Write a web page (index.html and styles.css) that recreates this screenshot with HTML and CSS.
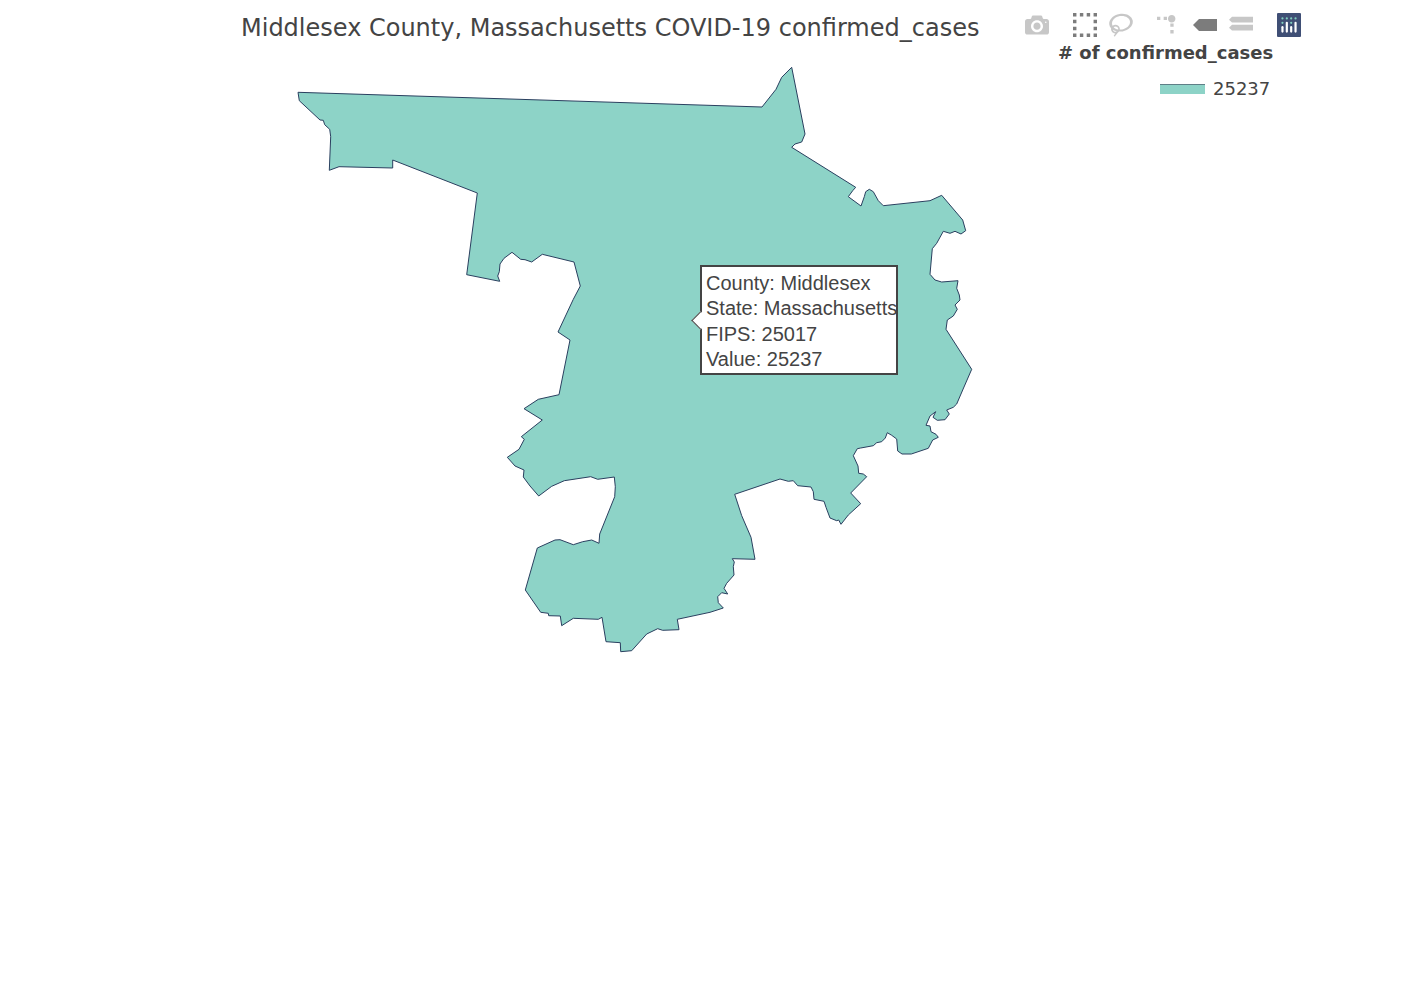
FILE: index.html
```html
<!DOCTYPE html>
<html lang="en">
<head>
    <meta charset="UTF-8">
    <meta name="viewport" content="width=device-width, initial-scale=1.0">
    <title>Middlesex County COVID-19</title>
    <link rel="stylesheet" href="styles.css">
</head>
<body>
    <div class="chart">
        <h1 class="chart-title">Middlesex County, Massachusetts COVID-19 confirmed_cases</h1>

        <!-- county outline, viewBox is in page coordinates -->
        <svg class="map" viewBox="0 56 1426 945">
            <path class="county" d="M298 92.3 299.3 100.7 320 120 323.3 120.3 324.7 124.7 329.7 129.3 330.7 136.7 329.3 170.3 339 166.7 392.7 168 392.7 160 477.3 193 466.7 274.7 499.7 281.3 497.7 276 499.3 271.7 500 264 504 258.3 512 252.3 520.7 259.3 525 259.7 531.7 262 542.3 254.3 574 262 580.3 286 573.3 299.3 558 332 570 340 559 394.7 538.3 399.3 524 408.7 542.3 420 521.3 436.7 524.3 439.3 519 449.3 507.3 457.3 515 466 524 470 523.3 477 530 486 538.7 496 551.7 486.3 564.3 480.7 590.7 476.7 597.7 479.3 614.3 477 615.3 486.7 614.7 496.7 599.7 534 599 543.3 591.7 540 582.7 541.7 573.3 544.7 560 539.7 555 540 537.3 548 525.3 590 540.7 612.3 548.3 613.3 548.7 615.7 560.3 616 561.7 625.7 573.3 618.3 598.3 619.3 602 617.3 606 641.7 620.3 642.7 620.7 651.7 631.7 650.7 646.7 634 657.7 628.7 662.7 630.3 679 629.7 677.3 619.3 710 612.3 723.3 608 718.3 602.7 717.7 596.7 721.7 592.7 727.7 594 724 588.3 726.7 583.3 734 575 733.3 566.7 734.3 562 732.3 558.7 755 559.3 751 537.3 741.7 515.7 734.7 494.3 780 479 788.3 481.3 793.3 480.7 797.7 485.7 811 487 813.3 491.7 814 499.3 824 501.3 826 507.3 830 518 836.7 520.7 838.7 520 841 524.3 848.3 515 860.7 503.7 850.7 493 866.7 476.7 863.3 474 858.7 473.3 858 466 853.3 455.7 857.3 448.7 860.7 448 873.3 445.7 876.7 442.7 881.7 441.7 885.3 438 887.3 432.7 891.7 435.3 896.7 439 897.7 451 902 454 911.3 454 928.3 448.3 932.7 440 938.3 437.3 936 434.3 931 431.7 930 426 926 425.3 930 416 935.7 411.7 933 417.3 937.3 420.3 945 419.7 949.3 414 946.7 410 953.3 407.3 956.7 404 962.7 390 971.7 369.3 946 329.3 947.3 320 953.3 316 957.3 309.3 955 305 960 300 959.3 295 956.7 288.3 958 280.7 941.7 282 935 280 930 274.3 932.3 248.7 936.7 243.3 943.3 231.3 950 233.3 955 231.3 961 234 965.7 230.7 962.7 220 941.7 195.3 930 200.7 883.3 205.7 878.3 200.7 873.3 191.7 869.3 189.3 865.7 191.7 864.3 196.7 861 206 848.3 196.7 852.7 190.7 855.7 187.3 791.7 147.3 795 144 801.7 142 805 134 791.7 67.3 781.7 77.3 776 89.3 762 107Z"/>
        </svg>

        <div class="hover-box">
            <div>County: Middlesex</div>
            <div>State: Massachusetts</div>
            <div>FIPS: 25017</div>
            <div>Value: 25237</div>
        </div>

        <div class="legend">
            <div class="legend-title"># of confirmed_cases</div>
            <div class="legend-item">
                <span class="legend-swatch"></span>
                <span>25237</span>
            </div>
        </div>

        <div class="modebar">
            <div class="modebar-group">
                <svg class="icon" viewBox="0 0 1000 1000"><path transform="matrix(1 0 0 -1 0 850)" d="m500 450c-83 0-150-67-150-150 0-83 67-150 150-150 83 0 150 67 150 150 0 83-67 150-150 150z m400 150h-120c-16 0-34 13-39 29l-31 93c-6 15-23 28-40 28h-340c-16 0-34-13-39-28l-31-94c-6-15-23-28-40-28h-120c-55 0-100-45-100-100v-450c0-55 45-100 100-100h800c55 0 100 45 100 100v450c0 55-45 100-100 100z m-400-550c-138 0-250 112-250 250 0 138 112 250 250 250 138 0 250-112 250-250 0-138-112-250-250-250z m365 380c-19 0-35 16-35 35 0 19 16 35 35 35 19 0 35-16 35-35 0-19-16-35-35-35z"/></svg>
            </div>
            <div class="modebar-group">
                <svg class="icon icon-select" viewBox="0 0 1000 1000"><path d="M0 0h143v143H0z M286 0h143v143H286z M571 0h143v143H571z M857 0h143v143H857z M0 286h143v143H0z M857 286h143v143H857z M0 571h143v143H0z M857 571h143v143H857z M0 857h143v143H0z M286 857h143v143H286z M571 857h143v143H571z M857 857h143v143H857z"/></svg>
                <svg class="icon" viewBox="0 0 1031 1000"><path transform="matrix(1 0 0 -1 0 850)" d="m1018 538c-36 207-290 336-568 286-277-48-473-256-436-463 10-57 36-108 76-151-13-66 11-137 68-183 34-28 75-41 114-42l-55-70 0 0c-2-1-3-2-4-3-10-14-8-34 5-45 14-11 34-8 45 4 1 1 2 3 2 5l0 0 113 140c16 11 31 24 45 40 4 3 6 7 8 11 48-3 100 0 151 9 278 48 473 255 436 462z m-624-379c-80 14-149 48-197 96 42 42 109 47 156 9 33-26 47-66 41-105z m-187-74c-19 16-33 37-39 60 50-32 109-55 174-68-42-25-95-24-135 8z m360 75c-34-7-69-9-102-8 8 62-16 128-68 170-73 59-175 54-244-5-9 20-16 40-20 61-28 159 121 317 333 354s407-60 434-217c28-159-121-318-333-355z"/></svg>
            </div>
            <div class="modebar-group">
                <svg class="icon" viewBox="0 0 1000 1000"><path transform="matrix(1.5 0 0 -1.5 0 850)" d="M512 409c0-57-46-104-103-104-57 0-104 47-104 104 0 57 47 103 104 103 57 0 103-46 103-103z m-327-39l92 0 0 92-92 0z m-185 0l92 0 0 92-92 0z m370-186l92 0 0 93-92 0z m0-184l92 0 0 92-92 0z"/></svg>
                <svg class="icon icon-active" viewBox="0 0 1500 1500"><path transform="translate(0 250)" d="M375 125 0 500 375 875H1500V125Z"/></svg>
                <svg class="icon" viewBox="0 0 1500 1500"><path d="M188 190 0 375 188 560H1500V190Z M188 690 0 875 188 1060H1500V690Z" transform="translate(0 -10) translate(0 50)"/></svg>
            </div>
            <div class="modebar-group">
                <svg class="icon" viewBox="0 0 132 132">
                    <rect class="logo-bg" width="132" height="132" rx="6" ry="6"/>
                    <g class="logo-dots">
                        <circle cx="30" cy="30" r="6"/>
                        <circle cx="54" cy="30" r="6"/>
                        <circle cx="78" cy="30" r="6"/>
                        <circle cx="102" cy="30" r="6"/>
                        <circle cx="30" cy="54" r="6"/>
                        <circle cx="78" cy="54" r="6"/>
                    </g>
                    <g class="logo-bars">
                        <rect x="24" y="72" width="12" height="36" rx="6"/>
                        <rect x="48" y="48" width="12" height="60" rx="6"/>
                        <rect x="72" y="72" width="12" height="36" rx="6"/>
                        <rect x="96" y="48" width="12" height="60" rx="6"/>
                    </g>
                </svg>
            </div>
        </div>
    </div>
</body>
</html>
```

FILE: styles.css
```css
body {
    margin: 0;
    background: #fff;
    color: #444;
    font-family: "DejaVu Sans", Verdana, sans-serif;
}
.chart {
    position: relative;
    width: 1426px;
    height: 1001px;
    overflow: hidden;
}
.chart-title {
    margin: 0;
    height: 56px;
    padding-left: 241px;
    font-size: 24px;
    font-weight: 400;
    line-height: 56px;
    white-space: nowrap;
}
.map {
    display: block;
    width: 1426px;
    height: 945px;
}
.county {
    fill: #8dd3c7;
    stroke: #2a3f5f;
    stroke-width: 1;
}
.hover-box {
    position: absolute;
    left: 700px;
    top: 265px;
    box-sizing: border-box;
    width: 198px;
    height: 110px;
    padding: 4px 0 0 4px;
    background: #fff;
    border: 2px solid #444;
    font-family: "Liberation Sans", Arial, sans-serif;
    font-size: 20px;
    line-height: 25.3px;
    white-space: nowrap;
}
.hover-box::before {
    content: "";
    position: absolute;
    left: -8px;
    top: 47px;
    width: 12px;
    height: 12px;
    background: #fff;
    border-left: 1.5px solid #444;
    border-bottom: 1.5px solid #444;
    transform: rotate(45deg);
}
.legend {
    position: absolute;
    left: 1058px;
    top: 41px;
    font-size: 18px;
}
.legend-title {
    font-weight: 700;
    line-height: 24px;
    white-space: nowrap;
}
.legend-item {
    display: flex;
    align-items: center;
    gap: 8px;
    margin: 12px 0 0 102px;
    line-height: 24px;
}
.legend-swatch {
    box-sizing: border-box;
    width: 45px;
    height: 10px;
    background: #8dd3c7;
    border-top: 1px solid #5f7f87;
}
.modebar {
    position: absolute;
    top: 13px;
    right: 125px;
    display: flex;
    gap: 24px;
}
.modebar-group {
    display: flex;
    gap: 12px;
}
.icon {
    display: block;
    width: 24px;
    height: 24px;
    fill: rgba(68, 68, 68, 0.3);
}
.icon-select {
    fill: rgba(68, 68, 68, 0.7);
}
.icon-active {
    fill: rgba(68, 68, 68, 0.7);
}
.logo-bg {
    fill: #3f4f75;
}
.logo-dots {
    fill: #80cfbe;
}
.logo-bars {
    fill: #fff;
}
```
